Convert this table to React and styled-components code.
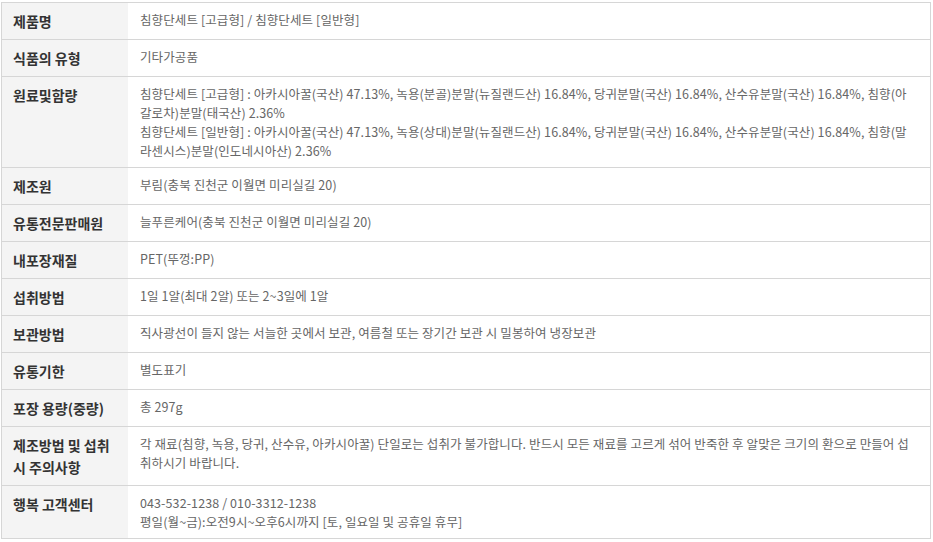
import React from "react";
import styled, { createGlobalStyle } from "styled-components";

const Global = createGlobalStyle`
  html, body { margin: 0; padding: 0; background: #fff; }
  body { font-family: "Noto Sans CJK KR", "Noto Sans", sans-serif; }
`;

const Wrap = styled.div`
  padding: 2px 2px 0 1px;
`;

const Table = styled.div`
  border: 1px solid #d6d6d6;
  display: flex;
  flex-direction: column;
`;

const Row = styled.div`
  display: grid;
  grid-template-columns: 126px 1fr;
  & + & {
    border-top: 1px solid #d6d6d6;
  }
`;

const Label = styled.div`
  background: #f4f4f4;
  color: #333;
  font-size: 14px;
  font-weight: 700;
  line-height: 22px;
  padding: 7px 12px 7px 11px;
`;

const Value = styled.div`
  color: #666;
  font-size: 12.5px;
  line-height: 19px;
  padding: 7px 12px;
  letter-spacing: 0.1px;
  word-break: break-all;
`;

const rows = [
  ["제품명", ["침향단세트 [고급형] / 침향단세트 [일반형]"]],
  ["식품의 유형", ["기타가공품"]],
  [
    "원료및함량",
    [
      "침향단세트 [고급형] : 아카시아꿀(국산) 47.13%, 녹용(분골)분말(뉴질랜드산) 16.84%, 당귀분말(국산) 16.84%, 산수유분말(국산) 16.84%, 침향(아갈로차)분말(태국산) 2.36%",
      "침향단세트 [일반형] : 아카시아꿀(국산) 47.13%, 녹용(상대)분말(뉴질랜드산) 16.84%, 당귀분말(국산) 16.84%, 산수유분말(국산) 16.84%, 침향(말라센시스)분말(인도네시아산) 2.36%",
    ],
  ],
  ["제조원", ["부림(충북 진천군 이월면 미리실길 20)"]],
  ["유통전문판매원", ["늘푸른케어(충북 진천군 이월면 미리실길 20)"]],
  ["내포장재질", ["PET(뚜껑:PP)"]],
  ["섭취방법", ["1일 1알(최대 2알) 또는 2~3일에 1알"]],
  ["보관방법", ["직사광선이 들지 않는 서늘한 곳에서 보관, 여름철 또는 장기간 보관 시 밀봉하여 냉장보관"]],
  ["유통기한", ["별도표기"]],
  ["포장 용량(중량)", ["총 297g"]],
  [
    "제조방법 및 섭취 시 주의사항",
    ["각 재료(침향, 녹용, 당귀, 산수유, 아카시아꿀) 단일로는 섭취가 불가합니다. 반드시 모든 재료를 고르게 섞어 반죽한 후 알맞은 크기의 환으로 만들어 섭취하시기 바랍니다."],
  ],
  ["행복 고객센터", ["043-532-1238 / 010-3312-1238", "평일(월~금):오전9시~오후6시까지 [토, 일요일 및 공휴일 휴무]"]],
];

export default function App() {
  return (
    <>
      <Global />
      <Wrap>
        <Table>
          {rows.map(([label, lines]) => (
            <Row key={label}>
              <Label>{label}</Label>
              <Value>
                {lines.map((l, i) => (
                  <div key={i}>{l}</div>
                ))}
              </Value>
            </Row>
          ))}
        </Table>
      </Wrap>
    </>
  );
}
